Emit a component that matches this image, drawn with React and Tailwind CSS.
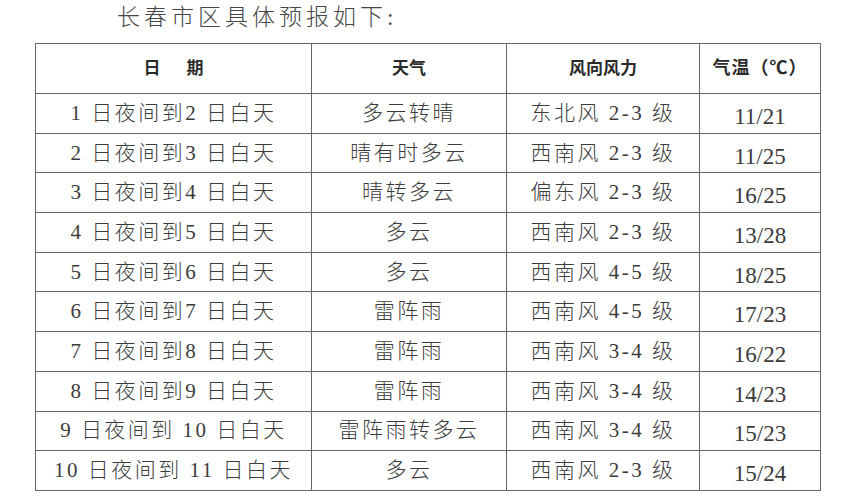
const rows = [
  ["1 日夜间到2 日白天", "多云转晴", "东北风 2-3 级", "11/21"],
  ["2 日夜间到3 日白天", "晴有时多云", "西南风 2-3 级", "11/25"],
  ["3 日夜间到4 日白天", "晴转多云", "偏东风 2-3 级", "16/25"],
  ["4 日夜间到5 日白天", "多云", "西南风 2-3 级", "13/28"],
  ["5 日夜间到6 日白天", "多云", "西南风 4-5 级", "18/25"],
  ["6 日夜间到7 日白天", "雷阵雨", "西南风 4-5 级", "17/23"],
  ["7 日夜间到8 日白天", "雷阵雨", "西南风 3-4 级", "16/22"],
  ["8 日夜间到9 日白天", "雷阵雨", "西南风 3-4 级", "14/23"],
  ["9 日夜间到 10 日白天", "雷阵雨转多云", "西南风 3-4 级", "15/23"],
  ["10 日夜间到 11 日白天", "多云", "西南风 2-3 级", "15/24"],
];

export default function App() {
  const font = { fontFamily: '"Liberation Serif", "Noto Sans CJK SC", serif' };
  return (
    <div
      className="w-[863px] h-[500px] bg-white text-[#3c3c3c] overflow-hidden"
      style={font}
    >
      <div className="pl-[117px] pt-[3px] h-[43px] text-[23px] tracking-[4px] leading-[30px] text-[#454545] font-light">
        长春市区具体预报如下:
      </div>
      <table className="ml-[35px] w-[785px] table-fixed border-collapse">
        <colgroup>
          <col className="w-[276px]" />
          <col className="w-[195px]" />
          <col className="w-[193px]" />
          <col className="w-[121px]" />
        </colgroup>
        <thead>
          <tr className="h-[50px]">
            <th className="border-[1.5px] border-[#666] text-[17px] font-bold text-[#2a2a2a]">
              日<span className="inline-block w-[26px]"></span>期
            </th>
            <th className="border-[1.5px] border-[#666] text-[17px] font-bold text-[#2a2a2a]">天气</th>
            <th className="border-[1.5px] border-[#666] text-[17px] font-bold text-[#2a2a2a]">风向风力</th>
            <th className="border-[1.5px] border-[#666] text-[18px] font-bold text-[#2a2a2a] tracking-[1px]">气温（℃）</th>
          </tr>
        </thead>
        <tbody>
          {rows.map((r, i) => (
            <tr key={i} className="h-[39.7px]">
              <td className="border-[1.5px] border-[#666] text-center text-[21px] font-light leading-none tracking-[2.5px]">{r[0]}</td>
              <td className="border-[1.5px] border-[#666] text-center text-[21px] font-light leading-none tracking-[2.5px]">{r[1]}</td>
              <td className="border-[1.5px] border-[#666] text-center text-[21px] font-light leading-none tracking-[2.5px]">{r[2]}</td>
              <td className="border-[1.5px] border-[#666] text-center text-[23px] leading-none pt-[6px]">{r[3]}</td>
            </tr>
          ))}
        </tbody>
      </table>
    </div>
  );
}
